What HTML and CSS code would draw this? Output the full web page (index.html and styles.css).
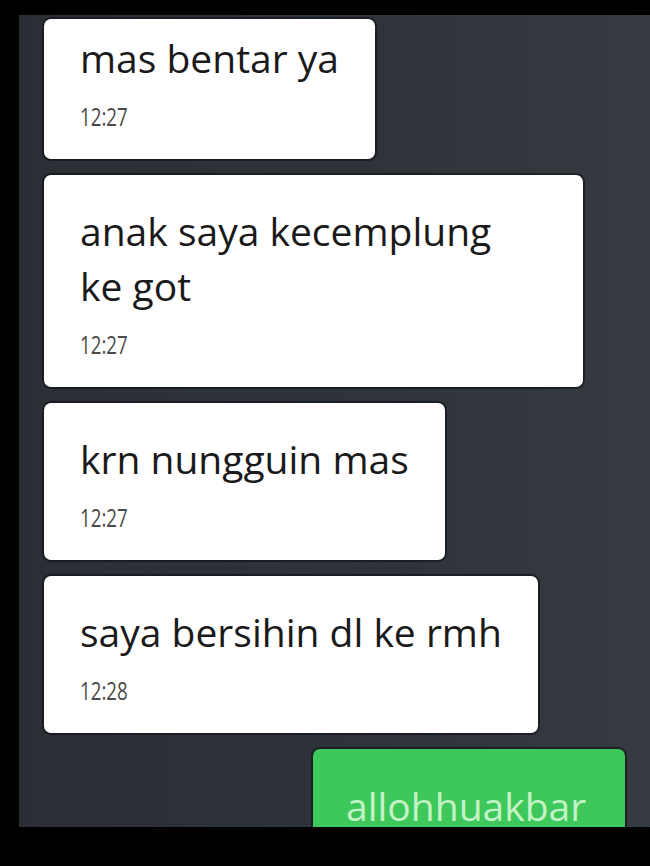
FILE: index.html
```html
<!DOCTYPE html>
<html lang="id">
<head>
<meta charset="utf-8">
<title>Chat</title>
<link rel="stylesheet" href="styles.css">
</head>
<body>
<div class="screen">
  <div class="chat">
    <div class="bubble in first">
      <div class="msg">mas bentar ya</div>
      <div class="time"><span>12:27</span></div>
    </div>
    <div class="bubble in wide">
      <div class="msg">anak saya kecemplung ke got</div>
      <div class="time"><span>12:27</span></div>
    </div>
    <div class="bubble in">
      <div class="msg">krn nungguin mas</div>
      <div class="time"><span>12:27</span></div>
    </div>
    <div class="bubble in">
      <div class="msg">saya bersihin dl ke rmh</div>
      <div class="time"><span>12:28</span></div>
    </div>
    <div class="bubble out">
      <div class="msg">allohhuakbar</div>
    </div>
  </div>
</div>
</body>
</html>
```
FILE: styles.css
```css
html, body {
  margin: 0;
  padding: 0;
  background: #000;
}
body {
  width: 650px;
  height: 866px;
  overflow: hidden;
  font-family: "Open Sans", "Noto Sans", sans-serif;
}
.screen {
  padding-top: 15px;
  padding-left: 19px;
}
.chat {
  height: 812px;
  overflow: hidden;
  background: linear-gradient(90deg, #2b2f35 0%, #2f343b 60%, #363b42 100%);
  padding-top: 4px;
  display: flex;
  flex-direction: column;
  gap: 16px;
  box-sizing: border-box;
}
.bubble {
  box-sizing: border-box;
  border-radius: 7px;
  width: fit-content;
  box-shadow: 0 0 0 2px rgba(10, 12, 15, 0.55);
}
.bubble.in {
  background: #ffffff;
  margin-left: 25px;
  max-width: 539px;
  padding: 28px 36px 30px 36px;
}
.bubble.in.first {
  padding-top: 11px;
}
.bubble.in.wide {
  padding-right: 60px;
}
.msg {
  font-size: 39px;
  line-height: 55px;
  color: #1a1a1a;
}
.time {
  margin-top: 18px;
  height: 26px;
  line-height: 26px;
  font-size: 25px;
  color: #4a4a4a;
}
.time span {
  display: inline-block;
  transform: scaleX(0.75);
  transform-origin: left center;
}
.bubble.out {
  align-self: flex-end;
  margin-right: 25px;
  background: #3ec85b;
  padding: 29px 37px 40px 33px;
  min-width: 312px;
}
.bubble.out .msg {
  color: #c3f3c6;
}
```
